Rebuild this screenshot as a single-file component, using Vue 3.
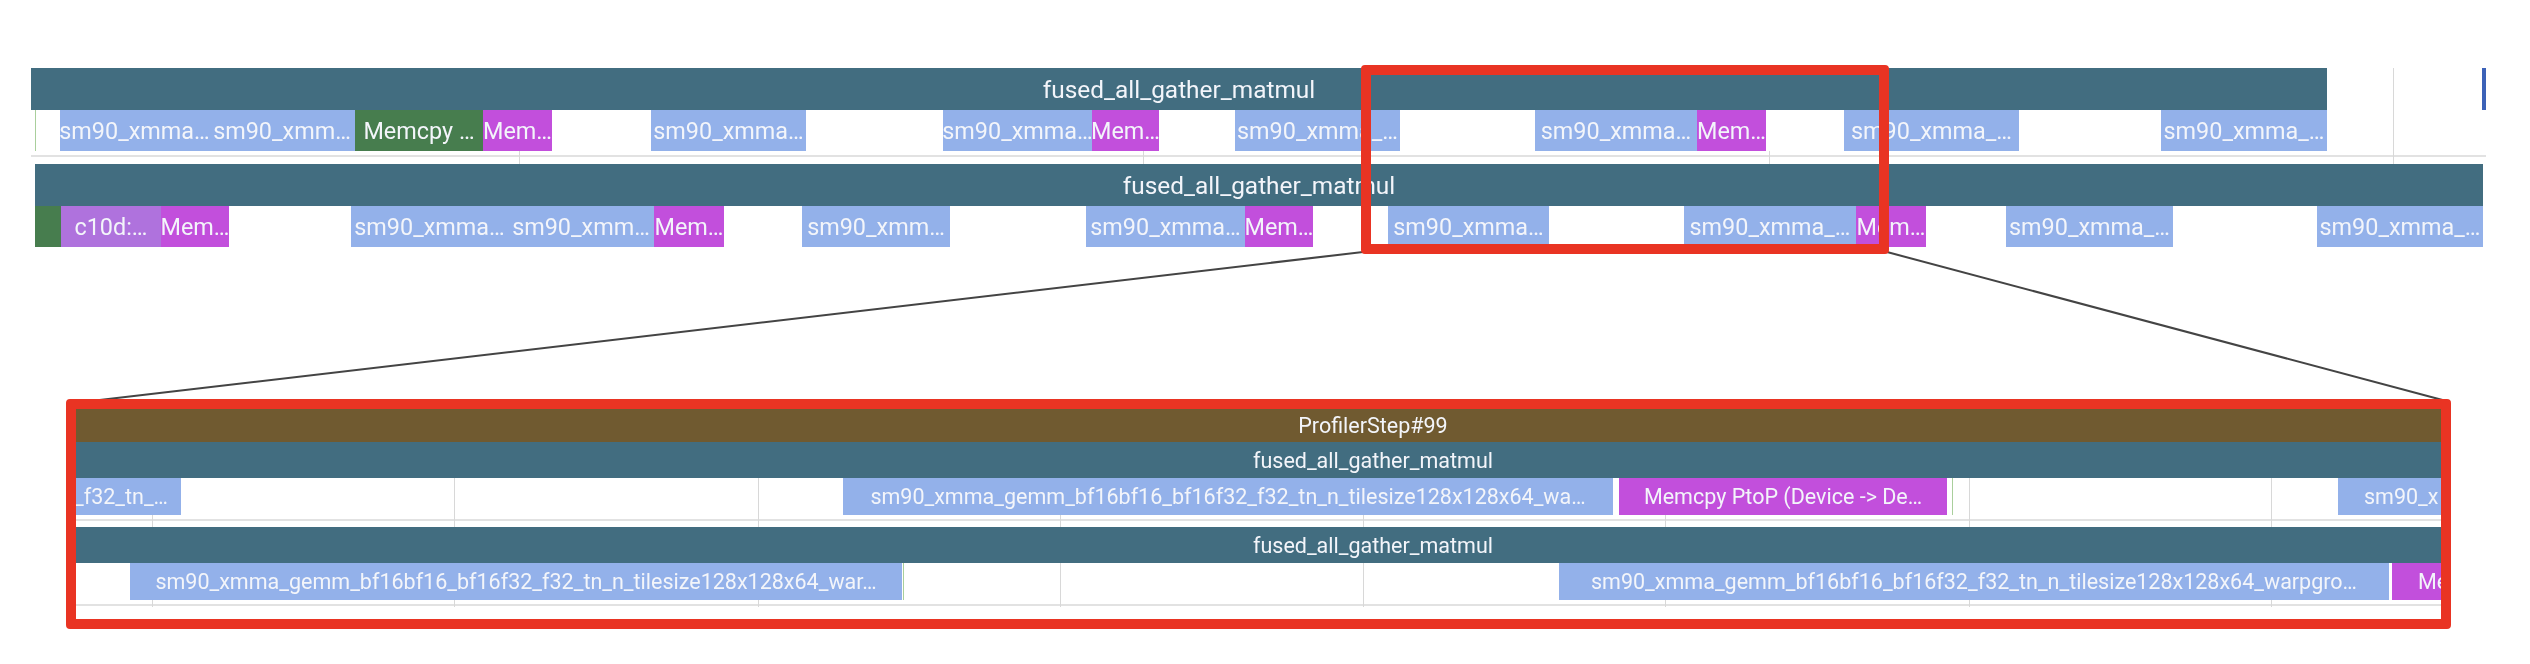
<template>
  <div class="page">
    <svg class="connectors" width="2530" height="664">
      <line x1="1363" y1="252" x2="74" y2="403" />
      <line x1="1887" y1="252" x2="2450" y2="402" />
    </svg>

    <section class="overview">
      <div v-for="(row, i) in overviewRows" :key="i" class="row" :class="row.type">
        <i v-for="g in row.grid" :key="g" class="grid" :style="{ left: g + 'px' }"></i>
        <div
          v-for="s in row.slices"
          :key="s.x"
          class="slice"
          :class="s.kind"
          :style="{ left: s.x + 'px', width: s.w + 'px' }"
        >{{ s.label }}</div>
      </div>
    </section>

    <section class="detail">
      <div v-for="(row, i) in detailRows" :key="i" class="row" :class="row.type">
        <i v-for="g in row.grid" :key="g" class="grid" :style="{ left: g - 76 + 'px' }"></i>
        <div
          v-for="s in row.slices"
          :key="s.x"
          class="slice"
          :class="s.kind"
          :style="{ left: s.x - 76 + 'px', width: s.w + 'px' }"
        >{{ s.label }}</div>
      </div>
    </section>

    <div class="highlight"></div>
  </div>
</template>

<script setup>
const SM = 'sm90_xmma…'
const SM2 = 'sm90_xmm…'
const SM3 = 'sm90_xmma_…'
const TITLE = 'fused_all_gather_matmul'
const LONG = 'sm90_xmma_gemm_bf16bf16_bf16f32_f32_tn_n_tilesize128x128x64_'

const topGrid = [519, 1143, 1769, 2393]
const lowGrid = [152, 454, 758, 1060, 1363, 1665, 1969, 2271]

const overviewRows = [
  { type: 'head', grid: [2393], slices: [
    { x: 31, w: 2296, kind: 'title', label: TITLE },
    { x: 2482, w: 4, kind: 'marker', label: '' }
  ] },
  { type: 'lane', grid: [2393], slices: [
    { x: 35, w: 1, kind: 'tick', label: '' },
    { x: 60, w: 149, kind: 'sm', label: SM },
    { x: 209, w: 146, kind: 'sm', label: SM2 },
    { x: 355, w: 128, kind: 'copy', label: 'Memcpy …' },
    { x: 483, w: 69, kind: 'mem', label: 'Mem…' },
    { x: 651, w: 155, kind: 'sm', label: SM },
    { x: 943, w: 149, kind: 'sm', label: SM },
    { x: 1092, w: 67, kind: 'mem', label: 'Mem…' },
    { x: 1235, w: 165, kind: 'sm', label: SM3 },
    { x: 1535, w: 162, kind: 'sm', label: SM },
    { x: 1697, w: 69, kind: 'mem', label: 'Mem…' },
    { x: 1844, w: 175, kind: 'sm', label: SM3 },
    { x: 2161, w: 166, kind: 'sm', label: SM3 }
  ] },
  { type: 'gap', grid: topGrid, slices: [] },
  { type: 'head', grid: [], slices: [
    { x: 35, w: 2448, kind: 'title', label: TITLE }
  ] },
  { type: 'lane', grid: [], slices: [
    { x: 35, w: 26, kind: 'copy', label: '' },
    { x: 61, w: 100, kind: 'c10d', label: 'c10d:…' },
    { x: 161, w: 68, kind: 'mem', label: 'Mem…' },
    { x: 351, w: 157, kind: 'sm', label: SM },
    { x: 508, w: 146, kind: 'sm', label: SM2 },
    { x: 654, w: 70, kind: 'mem', label: 'Mem…' },
    { x: 802, w: 148, kind: 'sm', label: SM2 },
    { x: 1086, w: 159, kind: 'sm', label: SM },
    { x: 1245, w: 68, kind: 'mem', label: 'Mem…' },
    { x: 1388, w: 161, kind: 'sm', label: SM },
    { x: 1684, w: 172, kind: 'sm', label: SM3 },
    { x: 1856, w: 70, kind: 'mem', label: 'Mem…' },
    { x: 2006, w: 167, kind: 'sm', label: SM3 },
    { x: 2317, w: 166, kind: 'sm', label: SM3 }
  ] }
]

// the long spans run on past the right edge of the zoomed view, so their titles sit right of centre
const detailRows = [
  { type: 'step', grid: [], slices: [
    { x: 76, w: 2594, kind: 'brown', label: 'ProfilerStep#99' }
  ] },
  { type: 'band', grid: [], slices: [
    { x: 76, w: 2594, kind: 'title', label: TITLE }
  ] },
  { type: 'lane', grid: lowGrid, slices: [
    { x: 76, w: 105, kind: 'sm end', label: '_f32_tn_…' },
    { x: 843, w: 770, kind: 'sm', label: LONG + 'wa…' },
    { x: 1619, w: 328, kind: 'mem', label: 'Memcpy PtoP (Device -> De…' },
    { x: 1952, w: 1, kind: 'tick', label: '' },
    { x: 2338, w: 103, kind: 'sm start', label: 'sm90_x' }
  ] },
  { type: 'gap', grid: lowGrid, slices: [] },
  { type: 'band', grid: [], slices: [
    { x: 76, w: 2594, kind: 'title', label: TITLE }
  ] },
  { type: 'lane', grid: lowGrid, slices: [
    { x: 130, w: 772, kind: 'sm', label: LONG + 'war…' },
    { x: 903, w: 1, kind: 'tick', label: '' },
    { x: 1559, w: 830, kind: 'sm', label: LONG + 'warpgro…' },
    { x: 2392, w: 49, kind: 'mem start', label: 'Me' }
  ] },
  { type: 'tail', grid: lowGrid, slices: [] }
]
</script>

<style>
body {
  background: #fff;
}
</style>

<style scoped>
.page {
  position: relative;
  width: 2530px;
  height: 664px;
  overflow: hidden;
  background: #fff;
  font-family: Roboto, "Liberation Sans", sans-serif;
  color: #f3f5fa;
  filter: blur(0.5px);
}
.connectors {
  position: absolute;
  left: 0;
  top: 0;
}
.connectors line {
  stroke: #444;
  stroke-width: 2;
}
.overview {
  padding-top: 68px;
  height: 399px;
  box-sizing: border-box;
}
.detail {
  width: 2385px;
  height: 230px;
  margin-left: 66px;
  box-sizing: border-box;
  border: 10px solid #e93423;
  border-radius: 4px;
  overflow: hidden;
  position: relative;
  background: #fff;
  font-size: 21.5px;
}
.highlight {
  position: absolute;
  left: 1361px;
  top: 65px;
  width: 528px;
  height: 189px;
  box-sizing: border-box;
  border: 10px solid #e93423;
  border-radius: 4px;
}
.row {
  position: relative;
}
.overview .head {
  height: 42px;
  font-size: 24.4px;
}
.overview .lane {
  height: 41px;
  font-size: 23.4px;
}
.overview .gap {
  height: 13px;
}
.overview .gap::before,
.detail .gap::before,
.detail .tail::before {
  content: "";
  position: absolute;
  left: 0;
  right: 0;
  height: 2px;
  background: #e2e2e2;
}
.overview .gap::before {
  left: 31px;
  width: 2455px;
  top: 4px;
}
.detail .step {
  height: 33px;
}
.detail .band {
  height: 36px;
}
.detail .lane {
  height: 37px;
}
.detail .gap {
  height: 12px;
}
.detail .gap::before {
  top: 4px;
}
.detail .tail {
  height: 7px;
}
.detail .tail::before {
  top: 4px;
}
.grid {
  position: absolute;
  top: 0;
  bottom: 0;
  width: 1px;
  background: #d8d8d8;
}
.slice {
  position: absolute;
  top: 0;
  bottom: 0;
  display: flex;
  align-items: center;
  justify-content: center;
  overflow: hidden;
  white-space: nowrap;
}
.sm {
  background: #93b1ea;
}
.mem {
  background: #c24fdc;
}
.copy {
  background: #477d4e;
}
.c10d {
  background: #af72dd;
}
.title {
  background: #426d80;
}
.brown {
  background: #705a30;
}
.marker {
  background: #3c62b8;
}
.tick {
  background: #a9cf9c;
}
.start {
  justify-content: flex-start;
  padding-left: 26px;
  box-sizing: border-box;
}
.end {
  justify-content: flex-end;
  padding-right: 13px;
  box-sizing: border-box;
}
</style>
